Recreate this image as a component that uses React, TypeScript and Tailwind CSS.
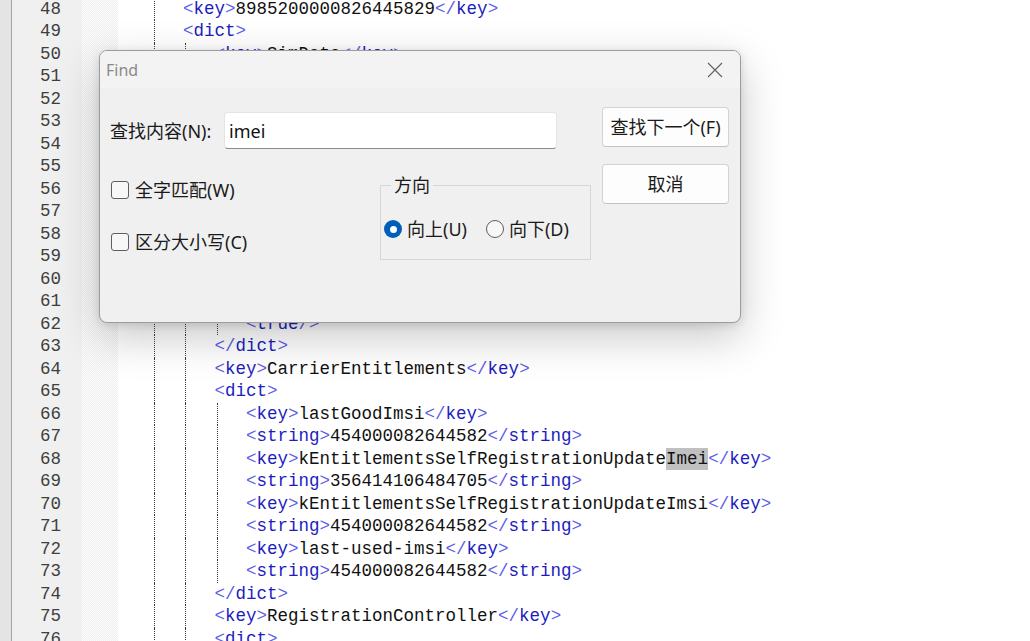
import React from "react"

// Notepad++ の XML 画面 + 検索ダイアログ

type Line = {
  n: number
  level: number // インデント段数
  guides: number[] // 点線ガイドを出す段
  text: string
  mark?: string // 検索ヒット部分
}

const L2 = [1]
const L3 = [1, 2]
const L4 = [1, 2, 3]

const lines: Line[] = [
  { n: 48, level: 2, guides: L2, text: "<key>8985200000826445829</key>" },
  { n: 49, level: 2, guides: L2, text: "<dict>" },
  { n: 50, level: 3, guides: L3, text: "<key>SimData</key>" },
  { n: 51, level: 3, guides: L3, text: "<dict>" },
  { n: 52, level: 4, guides: L4, text: "<key>CarrierName</key>" },
  { n: 53, level: 4, guides: L4, text: "<string>CSL</string>" },
  { n: 54, level: 4, guides: L4, text: "<key>mcc</key>" },
  { n: 55, level: 4, guides: L4, text: "<string>454</string>" },
  { n: 56, level: 4, guides: L4, text: "<key>mnc</key>" },
  { n: 57, level: 4, guides: L4, text: "<string>00</string>" },
  { n: 58, level: 4, guides: L4, text: "<key>slot</key>" },
  { n: 59, level: 4, guides: L4, text: "<integer>1</integer>" },
  { n: 60, level: 4, guides: L4, text: "<string>454000082644582</string>" },
  { n: 61, level: 4, guides: L4, text: "<key>active</key>" },
  { n: 62, level: 4, guides: L4, text: "<true/>" },
  { n: 63, level: 3, guides: L3, text: "</dict>" },
  { n: 64, level: 3, guides: L3, text: "<key>CarrierEntitlements</key>" },
  { n: 65, level: 3, guides: L3, text: "<dict>" },
  { n: 66, level: 4, guides: L4, text: "<key>lastGoodImsi</key>" },
  { n: 67, level: 4, guides: L4, text: "<string>454000082644582</string>" },
  { n: 68, level: 4, guides: L4, text: "<key>kEntitlementsSelfRegistrationUpdateImei</key>", mark: "Imei" },
  { n: 69, level: 4, guides: L4, text: "<string>356414106484705</string>" },
  { n: 70, level: 4, guides: L4, text: "<key>kEntitlementsSelfRegistrationUpdateImsi</key>" },
  { n: 71, level: 4, guides: L4, text: "<string>454000082644582</string>" },
  { n: 72, level: 4, guides: L4, text: "<key>last-used-imsi</key>" },
  { n: 73, level: 4, guides: L4, text: "<string>454000082644582</string>" },
  { n: 74, level: 3, guides: L3, text: "</dict>" },
  { n: 75, level: 3, guides: L3, text: "<key>RegistrationController</key>" },
  { n: 76, level: 3, guides: L3, text: "<dict>" },
]

const renderXml = (src: string, mark?: string) => {
  const parts = src.split(/(<\/?[\w-]+\/?>)/).filter(Boolean)
  return parts.map((p, i) => {
    const m = p.match(/^(<\/?)([\w-]+)(\/?>)$/)
    if (m) {
      return (
        <span key={i}>
          <span className="text-[#5f5fe8]">{m[1]}</span>
          <span className="text-[#1c1cc0]">{m[2]}</span>
          <span className="text-[#5f5fe8]">{m[3]}</span>
        </span>
      )
    }
    if (mark && p.endsWith(mark)) {
      return (
        <span key={i}>
          {p.slice(0, -mark.length)}
          <span className="inline-block bg-[#c0c0c0] leading-[22px]">{mark}</span>
        </span>
      )
    }
    return <span key={i}>{p}</span>
  })
}

const Editor: React.FC = () => (
  <div className="flex h-full font-[family-name:'Liberation_Mono','Courier_New',monospace] text-[17.5px]">
    <div className="w-[12px] shrink-0 border-r border-[#a3a3a3] bg-[#e4e4e4]" />
    <div className="w-[70px] shrink-0 bg-[#f0f0f0]">
      <div className="-mt-[2.25px]">
        {lines.map(l => (
          <div key={l.n} className="h-[22.5px] pr-[21px] text-right leading-[22.5px] text-[#3e3e3e]">
            {l.n}
          </div>
        ))}
      </div>
    </div>
    <div className="w-[36px] shrink-0 bg-[repeating-conic-gradient(#f1f1f1_0%_25%,#fbfbfb_0%_50%)] bg-[length:2px_2px]" />
    <div className="flex-1 bg-white pl-[2px]">
      <div className="-mt-[2.25px]">
        {lines.map(l => (
          <div key={l.n} className="flex h-[22.5px] whitespace-pre leading-[22.5px] text-[#111]">
            {Array.from({ length: l.level }).map((_, k) => (
              <span key={k} className="flex h-full w-[31.5px] shrink-0">
                {l.guides.includes(k) && (
                  <span className="ml-[2px] h-full border-l border-dotted border-[#3c3c3c]" />
                )}
              </span>
            ))}
            <span>{renderXml(l.text, l.mark)}</span>
          </div>
        ))}
      </div>
    </div>
  </div>
)

const Checkbox: React.FC<{ label: string }> = ({ label }) => (
  <div className="flex h-[18px] items-center gap-[6px]">
    <span className="h-[18px] w-[18px] shrink-0 rounded-[3px] border border-[#5e5e5e] bg-[#f7f7f7]" />
    <span className="leading-none">{label}</span>
  </div>
)

const Radio: React.FC<{ label: string; checked?: boolean }> = ({ label, checked }) => (
  <div className="flex h-[18px] items-center gap-[5px]">
    {checked ? (
      <span className="flex h-[18px] w-[18px] shrink-0 items-center justify-center rounded-full bg-[#005fb8]">
        <span className="h-[7px] w-[7px] rounded-full bg-white" />
      </span>
    ) : (
      <span className="h-[18px] w-[18px] shrink-0 rounded-full border border-[#5e5e5e] bg-[#f7f7f7]" />
    )}
    <span className="leading-none">{label}</span>
  </div>
)

const FindDialog: React.FC = () => (
  <div className="absolute left-[99px] top-[50px] flex h-[273px] w-[642px] flex-col overflow-hidden rounded-[8px] border border-[#9c9c9c] bg-[#f0f0f0] font-[family-name:'Segoe_UI','Noto_Sans','Noto_Sans_CJK_SC',sans-serif] text-[18px] text-[#1a1a1a] shadow-[0_14px_44px_rgba(0,0,0,0.22),0_2px_8px_rgba(0,0,0,0.12)]">
    <div className="flex h-[37px] shrink-0 items-center justify-between bg-[#f3f3f3] pl-[6px] pr-[17px]">
      <span className="text-[16px] text-[#8a8a8a]">Find</span>
      <svg width="16" height="16" viewBox="0 0 16 16" fill="none">
        <path d="M1 1L15 15M15 1L1 15" stroke="#606060" strokeWidth="1.1" />
      </svg>
    </div>
    <div className="flex flex-1 pl-[10px] pr-[11px] pt-[19px]">
      <div className="flex-1">
        <div className="mt-[5px] flex items-center">
          <span className="w-[114px] shrink-0 leading-none">查找内容(N):</span>
          <div className="flex h-[37px] w-[333px] items-center rounded-[4px] border border-[#e4e4e4] border-b-[#8a8a8a] bg-white pl-[4px] leading-none text-[#111]">
            imei
          </div>
        </div>
        <div className="mt-[26px] flex items-start">
          <div className="flex w-[270px] flex-col gap-[34px] pl-[1px] pt-[6px]">
            <Checkbox label="全字匹配(W)" />
            <Checkbox label="区分大小写(C)" />
          </div>
          <fieldset className="h-[85px] w-[211px] border border-[#d6d6d6]">
            <legend className="ml-[10px] px-[3px] leading-[20px]">方向</legend>
            <div className="flex gap-[19px] pl-[3px] pt-[25px]">
              <Radio label="向上(U)" checked />
              <Radio label="向下(D)" />
            </div>
          </fieldset>
        </div>
      </div>
      <div className="flex w-[127px] shrink-0 flex-col gap-[17px]">
        <button className="h-[40px] rounded-[4px] border border-[#d3d3d3] border-b-[#c2c2c2] bg-[#fdfdfd] leading-none text-[#1a1a1a]">
          查找下一个(F)
        </button>
        <button className="h-[40px] rounded-[4px] border border-[#d3d3d3] border-b-[#c2c2c2] bg-[#fdfdfd] leading-none text-[#1a1a1a]">
          取消
        </button>
      </div>
    </div>
  </div>
)

const App: React.FC = () => (
  <div className="relative h-[641px] w-full overflow-hidden bg-white">
    <Editor />
    <FindDialog />
  </div>
)

export default App
